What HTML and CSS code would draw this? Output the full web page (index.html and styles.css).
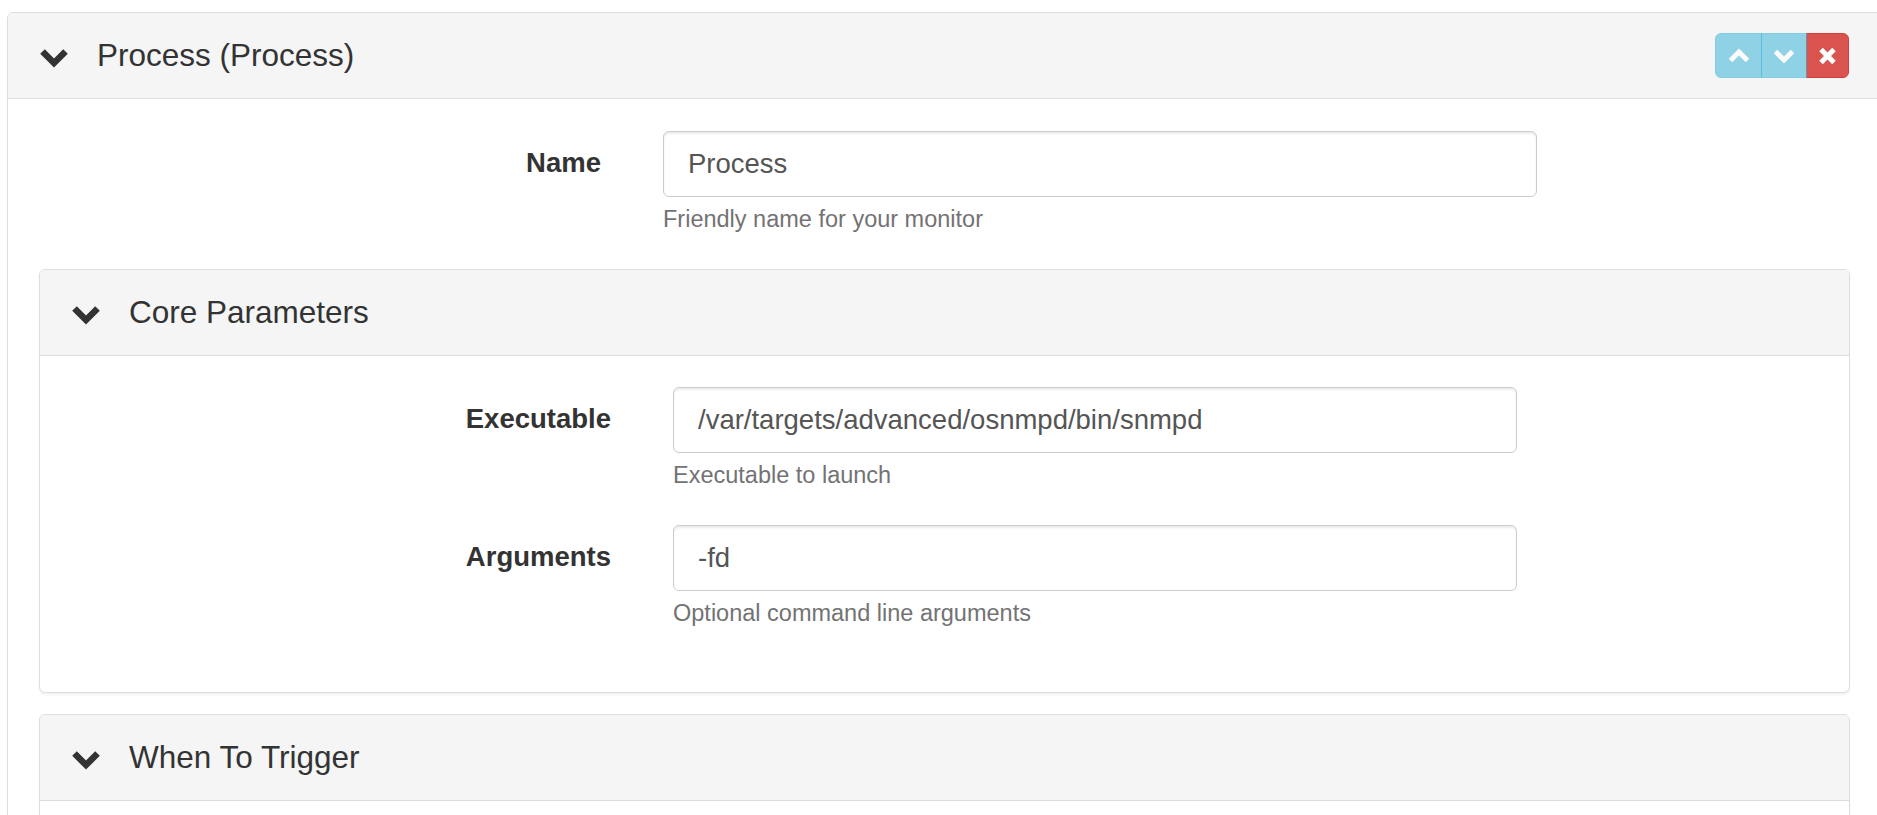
FILE: index.html
```html
<!DOCTYPE html>
<html lang="en">
<head>
<meta charset="utf-8">
<title>Process monitor</title>
<link rel="stylesheet" href="styles.css">
</head>
<body>
<div class="page">
  <div class="panel panel-outer">
    <div class="panel-heading">
      <svg class="chev" width="30" height="20" viewBox="0 0 30 20"><polyline points="3.5,3.5 15,15 26.5,3.5" fill="none" stroke="#333" stroke-width="6.5"/></svg>
      <h3 class="panel-title">Process (Process)</h3>
      <div class="btn-group">
        <button class="btn btn-info disabled" type="button"><svg width="24" height="16" viewBox="0 0 24 16"><polyline points="3.5,12.5 12,4 20.5,12.5" fill="none" stroke="#fff" stroke-width="5"/></svg></button>
        <button class="btn btn-info disabled" type="button"><svg width="24" height="16" viewBox="0 0 24 16"><polyline points="3.5,3.5 12,12 20.5,3.5" fill="none" stroke="#fff" stroke-width="5"/></svg></button>
        <button class="btn btn-danger" type="button"><svg width="19" height="18" viewBox="0 0 19 18"><path d="M3 2.5 L16 15.5 M16 2.5 L3 15.5" fill="none" stroke="#fff" stroke-width="5"/></svg></button>
      </div>
    </div>
    <div class="panel-body">
      <div class="form-group outer-group">
        <label class="control-label">Name</label>
        <div class="field">
          <input class="form-control" type="text" value="Process">
          <span class="help-block">Friendly name for your monitor</span>
        </div>
      </div>

      <div class="panel panel-inner">
        <div class="panel-heading">
          <svg class="chev" width="30" height="20" viewBox="0 0 30 20"><polyline points="3.5,3.5 15,15 26.5,3.5" fill="none" stroke="#333" stroke-width="6.5"/></svg>
          <h3 class="panel-title">Core Parameters</h3>
        </div>
        <div class="panel-body">
          <div class="form-group inner-group">
            <label class="control-label">Executable</label>
            <div class="field">
              <input class="form-control" type="text" value="/var/targets/advanced/osnmpd/bin/snmpd">
              <span class="help-block">Executable to launch</span>
            </div>
          </div>
          <div class="form-group inner-group">
            <label class="control-label">Arguments</label>
            <div class="field">
              <input class="form-control" type="text" value="-fd">
              <span class="help-block">Optional command line arguments</span>
            </div>
          </div>
        </div>
      </div>

      <div class="panel panel-inner">
        <div class="panel-heading">
          <svg class="chev" width="30" height="20" viewBox="0 0 30 20"><polyline points="3.5,3.5 15,15 26.5,3.5" fill="none" stroke="#333" stroke-width="6.5"/></svg>
          <h3 class="panel-title">When To Trigger</h3>
        </div>
        <div class="panel-body trigger-body"></div>
      </div>
    </div>
  </div>
</div>
</body>
</html>
```

FILE: styles.css
```css
html, body {
  margin: 0;
  padding: 0;
  overflow: hidden;
  background: #fff;
}

body {
  font-family: "Liberation Sans", Arial, sans-serif;
  font-size: 27.5px;
  color: #333;
}

.page {
  padding: 12px 0 0 7px;
}

.panel {
  background: #fff;
  border: 1px solid #ddd;
  border-radius: 6px;
  box-shadow: 0 2px 2px rgba(0, 0, 0, 0.05);
}

.panel-outer {
  width: 1875px;
  box-sizing: border-box;
}

.panel-inner {
  margin-bottom: 21px;
}

.panel-heading {
  display: flex;
  align-items: center;
  height: 85px;
  padding: 0 32px;
  background: #f5f5f5;
  border-bottom: 1px solid #ddd;
  border-radius: 5px 5px 0 0;
}

.chev {
  flex: none;
  margin-top: 5px;
  margin-left: -1px;
  margin-right: 28px;
}

.panel-title {
  margin: 0;
  font-size: 31.5px;
  font-weight: normal;
  color: #333;
  flex: 1;
}

.btn-group {
  display: flex;
  flex: none;
}

.btn {
  display: flex;
  align-items: center;
  justify-content: center;
  height: 45px;
  padding: 0;
  border: 1px solid transparent;
  cursor: pointer;
}

.btn + .btn {
  margin-left: -1px;
}

.btn-info {
  background: #5bc0de;
  border-color: #46b8da;
  width: 46px;
}

.btn-info:first-child {
  width: 47px;
  border-radius: 6px 0 0 6px;
}

.btn.disabled {
  opacity: 0.65;
}

.btn-danger {
  background: #d9534f;
  border-color: #d43f3a;
  width: 43px;
  border-radius: 0 6px 6px 0;
}

.panel-outer > .panel-body {
  padding: 32px 31px 0 31px;
}

.panel-inner > .panel-body {
  padding: 31px 31px 29px 31px;
}

.trigger-body {
  height: 200px;
}

.form-group {
  display: flex;
  margin-bottom: 36px;
}

.control-label {
  flex: none;
  text-align: right;
  font-weight: bold;
  line-height: 40px;
  padding-top: 12px;
}

.field {
  flex: none;
  margin-left: 62px;
  display: flex;
  flex-direction: column;
}

.outer-group .control-label {
  width: 562px;
}

.outer-group .field {
  width: 874px;
}

.inner-group .control-label {
  width: 540px;
}

.inner-group .field {
  width: 844px;
}

.form-control {
  box-sizing: border-box;
  height: 66px;
  width: 100%;
  padding: 0 24px;
  margin: 0;
  font-family: "Liberation Sans", Arial, sans-serif;
  font-size: 27.5px;
  color: #555;
  background: #fff;
  border: 1px solid #ccc;
  border-radius: 6px;
  box-shadow: inset 0 2px 2px rgba(0, 0, 0, 0.075);
  outline: none;
}

.help-block {
  display: block;
  margin-top: 8px;
  font-size: 23.5px;
  line-height: 28px;
  color: #737373;
}
```
